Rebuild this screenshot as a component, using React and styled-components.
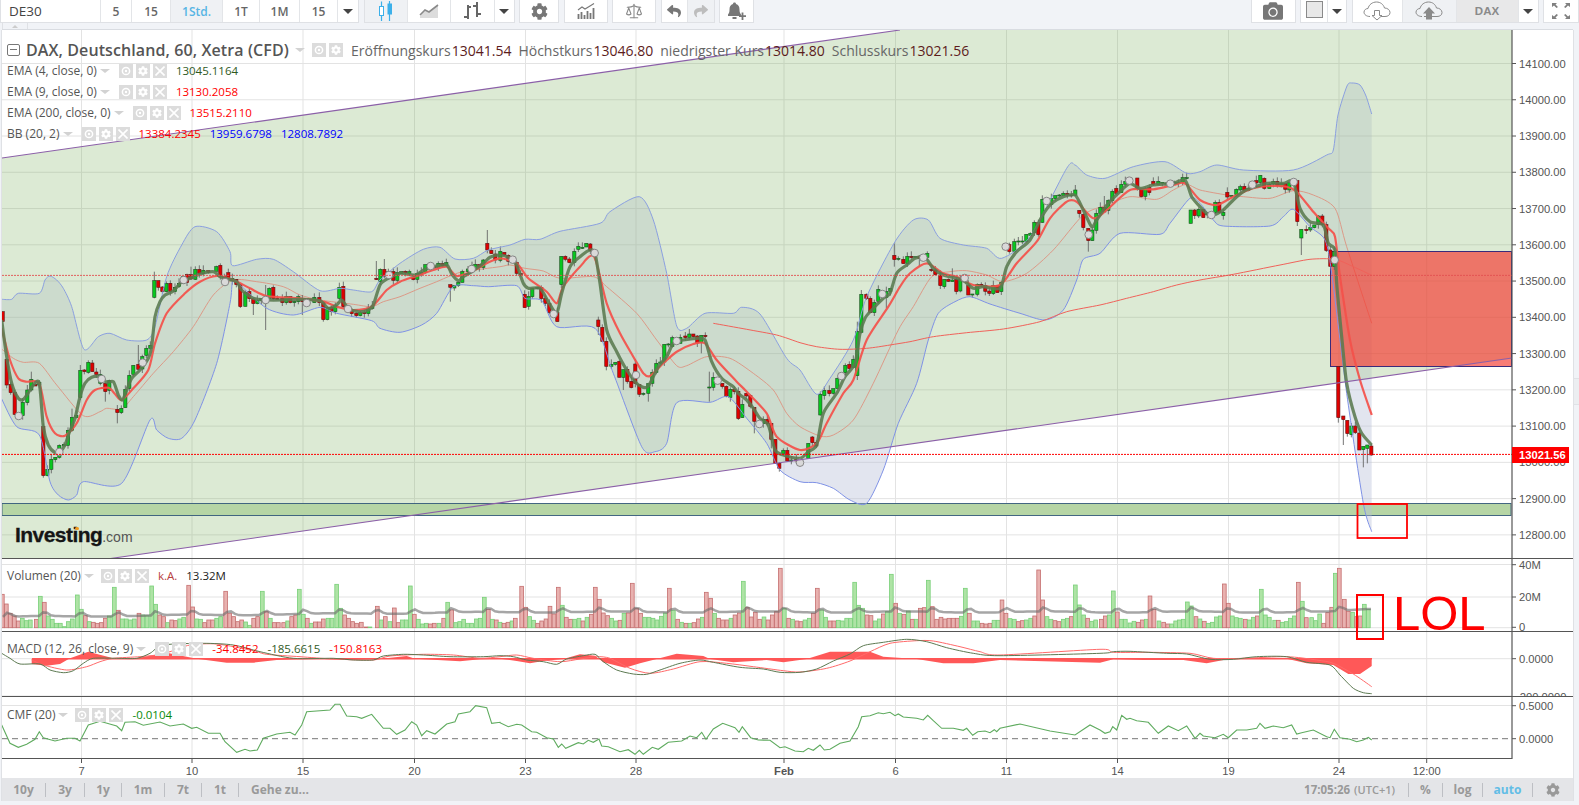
import React from "react";
import styled, { createGlobalStyle } from "styled-components";
import { FaCog, FaReply, FaShare, FaCamera } from "react-icons/fa";
import { Scale } from "lucide-react";

const GlobalStyle = createGlobalStyle`
  html, body { margin: 0; padding: 0; background: #f1f3f7; overflow: hidden; }
  body { font-family: "Open Sans", "Liberation Sans", sans-serif; }
  * { box-sizing: border-box; }
`;

/* ---------- chart data, traced from the picture ---------- */
const seg = (s, bx, by, k = 3) =>
  s.trim().split(/\s+/).map((t) => {
    const [x, y] = t.split(",").map(Number);
    return [bx + x / k, by + y / k];
  });
const toPts = (a) => a.map(([x, y]) => `${x.toFixed(1)},${y.toFixed(1)}`).join(" ");
const curve = (a) => {
  let d = "";
  for (let i = 0; i < a.length - 1; i++) {
    const p0 = a[Math.max(i - 1, 0)], p1 = a[i], p2 = a[i + 1], p3 = a[Math.min(i + 2, a.length - 1)];
    const k = 0.13;
    const c1 = [p1[0] + (p2[0] - p0[0]) * k, p1[1] + (p2[1] - p0[1]) * k];
    const c2 = [p2[0] - (p3[0] - p1[0]) * k, p2[1] - (p3[1] - p1[1]) * k];
    d += `C${c1[0].toFixed(1)} ${c1[1].toFixed(1)} ${c2[0].toFixed(1)} ${c2[1].toFixed(1)} ${p2[0].toFixed(1)} ${p2[1].toFixed(1)}`;
  }
  return d;
};
const smooth = (a) => `M${a[0][0].toFixed(1)} ${a[0][1].toFixed(1)}${curve(a)}`;

const EMA4 = [
  ...seg("5,450 20,560 35,640 55,685 70,688 85,668 100,645 118,640 130,770 145,825 165,848 180,845 195,825 207,790 225,745 240,680 255,640 275,622 300,620 320,637 340,635 355,675 367,690 380,660 395,625 420,600 445,565 455,530 465,440 480,395 495,375 520,363 545,335 570,325 600,312 640,305 660,320 675,325 710,335 725,360 760,385 800,390 850,390 900,388 960,392 985,415 1010,405 1025,390 1045,415 1075,425 1105,420 1120,405 1140,345 1165,325 1200,310", 0, 170),
  ...seg("45,315 75,298 100,290 140,285 155,312 175,332 190,320 215,305 250,280 270,262 300,255 330,265 350,285 370,340 385,355 420,355 445,395 470,430 485,370 510,290 540,260 570,240 585,250 600,340 620,480 650,545 680,600 710,640 735,653 750,640 775,590 800,560 820,520 850,510 890,505 915,510 935,575 965,625 1000,650 1015,670 1040,690 1060,715 1080,745 1105,765 1125,840 1150,855 1200,865", 400, 170),
  ...seg("25,905 50,885 70,790 110,730 135,680 165,640 180,550 195,505 215,480 250,445 270,430 290,370 320,345 345,325 375,322 400,355 430,375 470,385 495,395 520,415 550,410 600,415 620,350 650,305 690,270 725,200 755,160 790,140 825,135 850,180 875,230 890,210 925,160 965,120 990,100 1020,115 1060,105 1120,100 1155,90 1175,140 1200,170", 800, 150),
  ...seg("20,190 40,195 70,180 100,150 130,125 160,112 200,100 250,100 280,95 300,175 330,215 370,225 385,280 405,300 410,400 425,560 440,700 465,800 485,850 515,885", 1200, 150),
];
const EMA9 = [
  ...seg("5,475 30,570 55,625 80,635 118,640 140,740 165,790 195,797 230,760 260,690 285,660 325,653 345,672 365,690 400,655 445,600 465,520 500,430 555,370 600,335 650,318 700,330 750,355 800,378 900,385 970,395 1010,410 1060,420 1115,410 1160,360 1200,335", 0, 170),
  ...seg("50,318 100,300 140,290 170,318 215,305 260,280 300,265 350,280 385,325 440,365 470,400 490,350 540,290 582,260 620,400 660,490 700,560 730,610 750,618 790,580 830,545 880,522 915,520 950,570 1010,635 1040,665 1100,730 1130,800 1200,840", 400, 170),
  ...seg("50,880 80,820 130,730 160,690 200,570 265,470 300,410 330,370 380,340 430,370 470,380 520,405 600,405 650,340 710,275 750,205 800,155 830,155 880,205 920,180 990,120 1060,118 1120,105 1155,100 1200,150", 800, 150),
  ...seg("50,165 100,140 160,115 210,108 260,110 290,125 340,185 385,235 405,260 420,380 450,570 480,690 515,795", 1200, 150),
];
const BBMID = [
  ...seg("5,537 40,565 70,577 118,580 170,645 250,737 300,725 320,715 365,717 400,680 460,610 520,545 580,470 640,375 700,330 770,335 850,350 900,375 960,390 1060,403 1115,410 1150,395 1200,380", 0, 170),
  ...seg("60,355 110,335 150,318 190,305 300,290 330,285 375,295 430,303 480,325 580,320 620,350 710,430 770,510 830,587 860,587 920,560 990,565 1060,610 1120,660 1160,730 1200,770", 400, 170),
  ...seg("60,858 100,855 160,810 220,700 295,540 340,470 395,380 450,365 500,362 560,375 610,395 680,370 760,300 850,195 920,165 990,140 1070,148 1120,120 1160,103 1200,120", 800, 150),
  ...seg("80,135 130,140 210,145 280,122 340,135 405,175 440,290 515,520", 1200, 150),
];
const BBUP = [
  ...seg("5,388 35,388 55,370 118,370 135,330 150,318 170,330 190,355 215,410 252,538 295,500 330,490 380,510 440,510 465,470 500,320 545,225 585,170 650,185 690,245 698,287 770,268 820,268 880,305 960,362 1020,355 1060,360 1115,365 1140,330 1200,280", 0, 170),
  ...seg("70,238 120,232 165,267 220,265 265,240 330,225 375,208 420,208 480,184 600,160 630,125 718,80 760,150 800,310 830,468 860,475 915,430 1000,430 1025,412 1080,432 1160,565 1200,600", 400, 170),
  ...seg("50,733 90,685 160,570 200,440 285,275 340,210 385,210 420,265 490,285 560,295 605,325 690,260 800,55 825,45 860,75 915,85 1000,50 1095,35 1160,70 1200,65", 800, 150),
  ...seg("50,45 130,60 280,60 380,15 400,0", 1200, 150),
  [1338, 115], [1347, 86], [1352, 83], [1360, 85], [1366, 96], [1371.7, 114],
];
const BBLOW = [
  ...seg("5,687 50,770 118,795 150,935 175,975 205,990 230,975 250,935 365,940 450,750 470,780 505,805 545,805 585,750 650,580 690,400 698,335 720,345 800,415 880,435 960,412 1010,430 1115,452 1140,475 1200,487", 0, 170),
  ...seg("65,465 110,430 160,350 220,347 265,350 350,347 375,385 425,392 470,470 585,475 640,610 725,830 765,845 800,820 830,698 930,697 985,680 1040,745 1100,820 1140,900 1200,935", 400, 170),
  ...seg("50,998 100,1015 150,1050 200,1060 250,960 295,820 350,700 385,570 415,490 465,455 510,440 570,462 660,490 735,510 790,480 830,390 850,328 900,310 960,250 1080,253 1110,220 1170,145 1200,160", 800, 150),
  ...seg("40,210 70,228 210,228 250,200 280,178 330,230 375,270 395,370 440,730 490,1060 515,1145", 1200, 150),
];
const EMA200 = [
  ...seg("940,460 1040,478 1130,495 1200,518", 400, 170),
  ...seg("50,590 120,598 200,595 270,585 330,575 400,560 500,548 610,537 720,515 800,485 900,465 980,445 1060,425 1130,405 1200,390", 800, 150),
  ...seg("100,373 240,345 330,328 405,328 460,350 515,376", 1200, 150),
];

const parseCandles = (s, bx, by) =>
  s.trim().split(/\s+/).map((tok, i) => {
    const m = tok.match(/^(\d+)([rg])(\d+)-(\d+)(?:w(\d+)-(\d+))?$/);
    const t = +m[3], b = +m[4];
    return {
      x: bx + +m[1] / 3,
      g: m[2] === "g",
      t: by + t / 3,
      b: by + Math.max(b - t, 3) / 3 + t / 3,
      wt: by + (m[5] ? +m[5] : t - ((i * 7) % 6) * 3) / 3,
      wb: by + (m[6] ? +m[6] : b + ((i * 5) % 7) * 2) / 3,
    };
  });

const CANDLES = [
  ...parseCandles("8r425-455 20r568-645 32r643-668 44r668-733 68g697-737 82g660-698 94g628-660w605-665 106r643-648 118g637-645 130r769-917 142g898-917 154g868-898 166g862-869 178g826-862 192g823-828 204g781-826 216g742-781w716-785 229g736-743 241g601-683w585-690 253r600-605 265g577-607 277r579-605 289r606-614 301g614-640 316r640-665w640-695 328g632-661 352r718-728w705-760 364g715-728 376g658-713 388g616-655 400g586-613 415r583-598w525-600 427g560-597 439g535-556 451g526-535 463g332-382w305-385 475r332-352 487r351-365 499g340-365 511r340-365 525g352-365 537g340-350 549g320-340 561r314-338 573r314-327w290-330 586g298-328 598r298-311 610g301-311 625r302-307 649g290-304 661r286-319 673r320-328 685r308-325 697g326-332 709r328-344 721r344-410 736g367-409 748r365-386 760r386-401w386-435 772g391-401 784g386-391 808g355-386 820r352-386 832r385-389 847r385-398 859g380-398 871r380-398 883g394-398 895g380-395 907r390-395w375-435 943g382-398 958r382-398 970r398-449 982g413-449 994r412-425 1006g407-425 1018g352-385w338-390 1030r349-410w335-415 1055r422-431 1069r430-437 1081g428-437 1093r427-431 1105g414-431 1117g408-415 1129r325-329w273-330 1141g298-335 1153r298-320w267-325 1165g305-315 1180r305-331 1192g307-331 797g386-391w345-480", 0, 170),
  ...parseCandles("4g305-310 16r304-309 28g305-310 40r322-329 52g311-328 64g307-312 76g284-307 103r290-294 115g280-293 127r281-287 139g278-287 151r344-352w344-395 163g347-354 175g337-347 187g305-337 204g297-305 216g287-304 226g283-295 238r283-293 250g270-292 262r220-240w180-250 274r241-251 286r252-270 301g244-271 313r247-255 325r256-274 350r278-310 362r310-316 374r373-413 386g379-409 397g355-380 412g353-356 424r352-386 436r385-400 448r400-428 472r428-455 484g259-344 496r259-268 508r267-278 523g244-277 535g229-238 547g232-233 559g220-231 571r222-242 595r450-470w440-495 607r472-514 619r514-589 634g583-589 646g577-583 658r574-622 670g599-622w599-660 682r598-635 694r634-653 706r582-640 718r644-673 730g670-673 745g641-670w641-695 757g607-640 769g580-607 781g576-580 793g523-576 805g522-524 817g503-529 841g502-520 856r498-503 868g492-503 880r492-500 892r498-519 904g496-517w496-550 916r496-500 928g651-653w605-695 940g622-652 967r640-650 979r649-680 991g658-683 1003r658-665 1015r664-746 1027g703-743 1039r670-678 1051r676-709 1063r712-754w712-790 1090g748-761 1102r748-761 1114r760-808w760-835 1126r808-880 1138r880-895 1150g841-851 1162r841-873 1174g870-871 1189r868-873", 400, 170),
  ...parseCandles("25g880-925 37r861-878 49r877-888 61g733-795 73g721-737 88r721-731 100g716-730 112g685-716 136g646-668 148r643-656 160g628-652 172g545-677w515-690 184g433-547w420-550 199r433-446 211r445-488 223g458-488 235g418-454 259g425-442w410-475 271g415-425 283r316-329w280-350 295g325-328 310r328-341 322g319-341 334r319-323 346g320-323 358r320-325w315-350 382g310-322 394r358-362 406r360-374 421r376-407 433g388-410 445r388-394 457g390-395w355-395 469r388-425 481g388-423 505r406-435 517g432-433 532g403-433 544r403-408 556r406-424 568r423-430 580g407-431 592r406-428 604g398-425 628r284-305 643g275-305 655g273-274 667g273-274 679g253-274 691g250-256 703g217-248 715r218-254 727g148-217 754g146-164 766g137-146 778g135-137 790g130-137 802r130-135 814g135-137 826g120-136 838r181-191 850r193-233 865r235-272w235-305 877g240-272 889g190-241 901g172-191 913r172-186w138-186 925g151-181 937g124-152 949r115-131 964g103-128 976g95-103 1012r84-116 1024r119-140 1036g116-139 1048r112-128 1060r94-104 1075g94-103 1087g97-99 1099g99-101 1123g98-100 1135g97-99 1148g83-97 1160g83-85 1172g180-220 1184r180-197 1196g178-198", 800, 150),
  ...parseCandles("10r178-203 22g190-195 46g157-188 58r157-188 70g187-197 82r127-141 94g136-138 109g118-134 121g110-120 133r109-122 145g115-122 169r92-99 181g76-97 193r85-115 208g104-116 220g95-102 232r94-107 244g100-110 256r100-118 268g97-120 292r92-215w92-228 304g238-264w238-315 319r238-242 331g232-240 343g225-233 355g198-224 367r198-224 379r224-302 391r300-349 403g305-350 415r650-803w650-818 430r798-809w798-885 442r811-851w811-860 454g828-854 466r828-848 478r849-900 490g889-899w889-952 502g885-895w885-940 514r888-915", 1200, 150),
];

const CIRCLES = [
  ...seg("56,738 178,846 305,627 428,578 551,330 675,336 797,390 920,399 1044,417 1167,315", 0, 170),
  ...seg("92,288 215,297 338,269 461,432 584,249 708,615 830,513 953,632 1078,762 1200,878", 400, 170),
  ...seg("124,678 247,432 370,323 494,384 617,290 740,153 866,254 988,92 1111,101", 800, 150),
  ...seg("34,195 157,104 281,96 404,330", 1200, 150),
];

const parseVol = (s, bx, by) =>
  s.trim().split(/\s+/).map((tok) => {
    const m = tok.match(/^(\d+)([rg])(\d+)$/);
    return { x: bx + +m[1] / 3, g: m[2] === "g", y: Math.min(by + +m[3] / 3, 627) };
  });
const VOLUME = [
  ...parseVol("7r343 19r372 31r400 43r408 55r423 67g415 79g422 91g420 109r418 121g349 133r367 145g408 157g418 169g430 181g430 193g440 205g425 217g417 232g345 244g388 256r407 268g425 280r427 292r430 304r428 316r415 328g408 343g322 355r391 367g417 379g417 391g420 403g417 417r400 429g405 441g407 455g318 467g373 479r405 491r410 503g428 515r420 527r422 539g417 551g412 566r316 578r381 590g417 602g418 614r428 626r420 638r420 650g415 662g410 677r334 689r400 701r410 713r425 725r420 737g426 749g436 761r415 773r410 787g334 799r395 811g415 823r428 835r428 851r428 863g423 875r410 887r405 898g328 910g403 922r415 934g430 946r426 958r426 970r417 984g415 996g415 1010g313 1022g385 1034r405 1046r415 1058r425 1070r430 1084r427 1098r441 1110g442 1132r379 1144g420 1156r410 1170g425 1183r384 1195r428 1207g420 1219g420 1231g318 1243r403 1255g418 1267g432 1279g430 1291r432 1303r430 1317g430 1331r415 1343g367 1355r390 1367g428 1379g425 1391g418 1403g430 1415g430 1429g417 1441g415 1453g352 1465r388 1477g418 1489r420", 0, 480),
  ...parseVol("0g202 12r205 24r202 36g198 46r190 65r94 77r157 89g185 101g196 113r205 125r198 138r192 150r154 162r177 175r97 187g151 199r187 212r193 224g193 237g190 249r198 261g187 274r178 286r97 298r133 310r174 323r182 335g190 348g198 360r196 372g175 385r174 397r85 410r160 422r175 434g187 447g187 459g190 471g195 484g184 496g174 508r100 520g166 533r193 545g202 558r205 570g205 582r203 595r192 607g187 619r112 632r130 644g175 656r190 668r195 681r195 693g190 705r180 718r174 730g79 742r157 754r186 766r172 779r193 792g186 804r195 817r180 829r170 841r40 853g160 866r190 878g193 891r198 903r200 915g195 928g190 940r175 952r100 965g165 977g187 990r198 1002r198 1015g196 1027g198 1040g190 1052g190 1064g82 1076g151 1088g160 1101r180 1113r182 1126g198 1138g192 1150r177 1162g170 1174g58 1187r145 1199g175 1212r178 1225g168 1237r193 1249g193 1261r160 1273r158 1285g76 1297r155 1310r193 1323r187 1335r192 1347r190 1360r190 1372r190 1384g184 1396g100 1408r175 1421g198 1433g198 1446r205 1458r207 1470r205 1482g196 1495g196", 500, 555),
  ...parseVol("6r150 18r190 30g206 43g208 55r215 67r212 79g210 92g205 104r198 116r60 128r150 141g200 153g208 165r212 177r215 190g208 202g205 214r200 226g105 238g165 251g195 263r205 275g214 287g210", 1000, 550),
  ...parseVol("4r208 16r198 28g195 40g123 52r186 64g208 76g208 90g219 102g214 115r217 127r210 139g208 150r138 162r178 177g213 191r217 203r222 215g222 227g213 238g210 250g208 262g156 274g168 288r200 300g207 313r214 325g220 337g217 349g201 361g198 373r102 385r160 397g198 409g203 421g205 436r208 448g210 460g202 472r198 484g118 496g195 508g202 524g211 535r211 547g217 559g215 571g205 583g198 595r97 607g154 619r203 635g203 647g212 659g192 671r220 683r188 695r172 706g70 718r55 733r148 745r184 758g187 770r200 781r198 793g163 805g178", 1100, 550),
].filter((b) => b.x > 2);

const VOL_MA = (() => {
  const out = [];
  for (let x = 3; x <= 1372; x += 4) {
    const d = ((x - 40.6 + 370) % 37) - 4;
    const base = 617 - 5 * Math.min(1, x / 520) - (x > 1330 ? ((x - 1330) / 40) * 3 : 0);
    const bump = 4 * Math.exp(-((d / 5) ** 2)) + 0.6 * Math.sin(x / 23);
    out.push([x, base - bump]);
  }
  return out;
})();

const MACD_LINE = [
  ...seg("5,520 30,535 60,552 120,552 150,570 190,578 220,572 250,550 280,535 350,535 410,535 450,520 490,495 610,490 700,495 780,515 880,535 1000,535 1060,540 1120,540 1150,528 1210,523 1270,525 1350,530 1450,530 1500,527", 0, 480),
  ...seg("40,305 80,315 130,320 170,328 200,312 250,302 285,298 310,320 350,345 400,357 440,358 480,345 540,325 600,315 640,322 720,337 790,342 840,352 900,352 950,342 1000,318 1050,297 1090,272 1150,262 1220,253 1280,260 1340,278 1420,295 1500,302", 500, 555),
  ...seg("0,310 40,305 90,304 200,310 260,312 330,328 400,328 470,320 560,320 620,337 690,345 720,375 760,415 790,428 815,431", 1100, 550),
];
const MACD_SIGNAL = [
  ...seg("95,540 130,555 200,570 260,560 300,545 340,535 420,530 470,525 510,515 570,495 650,492 760,512 800,523 900,530 1000,537 1120,540 1170,528 1270,523 1360,525 1440,535 1500,530", 0, 480),
  ...seg("50,300 100,310 180,320 240,312 290,305 330,310 390,340 450,355 520,342 600,320 680,325 760,335 850,347 900,351 980,340 1050,318 1110,290 1170,265 1250,257 1300,258 1380,275 1440,290 1500,300", 500, 555),
  ...seg("0,298 40,307 150,307 270,310 340,325 430,325 560,320 650,330 700,340 760,372 815,410", 1100, 550),
];
const MACD_HIST = [
  ...seg("95,536 95,552 140,557 180,552 210,535 265,515 340,535 400,536 500,518 590,536 680,548 760,548 830,540 950,536 1060,540 1130,538 1220,528 1245,536 1380,544 1440,538 1500,536", 0, 480),
  ...seg("50,318 90,325 130,318 190,312 240,298 285,302 310,322 375,338 420,325 470,312 530,296 610,303 630,312 700,322 800,315 850,322 920,312 990,290 1040,290 1110,290 1150,305 1250,312 1330,325 1420,325 1500,315", 500, 555),
  ...seg("0,338 40,328 130,330 250,330 320,340 390,326 560,326 620,340 700,345 745,372 780,372 815,348 815,326", 1100, 550),
];

const CMF = [
  ...seg("5,735 30,790 55,802 80,793 105,778 118,755 130,773 165,783 200,775 225,775 240,783 265,735 300,724 350,738 365,752 375,727 405,725 430,736 480,726 510,738 550,732 575,745 590,742 625,760 660,760 675,785 710,817 735,808 750,813 772,810 790,775 830,762 870,757 885,765 905,735 920,695 990,690 1005,673 1020,673 1040,708 1070,710 1085,715 1115,703 1150,745 1170,745 1190,763 1215,750 1235,725 1250,735 1265,767 1280,752 1305,762 1340,732 1365,725 1375,702 1410,695 1427,677 1460,683 1475,730 1500,727", 0, 480),
  ...seg("0,503 25,515 50,508 65,510 95,530 110,532 140,548 160,552 175,577 185,567 197,580 235,563 250,567 265,556 280,562 297,552 305,573 325,575 360,590 385,584 405,598 418,586 430,598 457,577 475,583 505,562 545,558 570,543 590,548 605,532 618,553 640,522 668,505 705,518 717,532 727,515 752,548 775,555 810,556 840,578 855,575 885,588 910,590 925,580 940,586 960,570 973,585 990,583 1020,565 1050,558 1075,515 1085,485 1110,482 1135,473 1150,476 1170,472 1185,482 1195,477 1210,486 1250,490 1270,495 1283,481 1300,497 1325,520 1360,520 1390,526 1400,520 1418,541 1433,530 1455,528 1470,533 1483,524 1490,530 1500,520", 500, 555),
  [1020, 724], [1050, 731], [1075, 735], [1090, 725],
  ...seg("0,540 15,550 30,545 38,530 50,540 65,496 80,508 90,505 110,512 145,517 175,550 205,528 235,542 260,528 285,565 300,550 310,558 345,563 370,553 385,563 410,540 440,540 470,535 480,520 495,535 520,528 550,533 575,525 590,552 605,548 640,540 680,560 690,563 703,538 720,563 750,568 770,575 790,570 805,562 815,570", 1100, 550),
];

const GRID_X = [81.5, 192, 303, 414.5, 525.5, 636, 784, 895.5, 1006.5, 1117.5, 1228.5, 1339, 1426.7];
const PRICES = [14100, 14000, 13900, 13800, 13700, 13600, 13500, 13400, 13300, 13200, 13100, 13000, 12900, 12800];
const priceY = (p) => 63.5 + (14100 - p) * 0.3626;
const AXIS_X = 1512;

/* ---------- styled parts ---------- */
const Page = styled.div`
  width: 1579px;
  height: 805px;
  display: flex;
  flex-direction: column;
  background: #f1f3f7;
  position: relative;
`;
const Toolbar = styled.div`
  height: 23px;
  display: flex;
  justify-content: space-between;
`;
const ToolSet = styled.div`
  display: flex;
  gap: 4.5px;
`;
const ToolGroup = styled.div`
  display: flex;
  background: #fff;
  border: 1px solid #dfe1e5;
  border-top: 0;
`;
const SymbolField = styled.div`
  width: 100px;
  display: flex;
  align-items: center;
  padding-left: 8px;
  font-size: 13.5px;
  color: #444;
  border-right: 1px solid #e3e5e8;
`;
const ToolBtn = styled.div`
  width: ${(p) => p.$w}px;
  display: flex;
  align-items: center;
  justify-content: center;
  font-size: 12px;
  font-weight: 600;
  color: ${(p) => (p.$active ? "#57b5e4" : "#666")};
  background: ${(p) => (p.$active ? "#eff1f4" : "#fff")};
  border-right: ${(p) => (p.$last ? "0" : "1px solid #e3e5e8")};
  svg { display: block; }
`;
const DaxBtn = styled(ToolBtn)`
  background: #e8e8e9;
  color: #8a8a8a;
  font-family: "Liberation Sans", sans-serif;
  font-weight: 700;
  font-size: 11.5px;
`;
const Caret = styled.span`
  width: 0;
  height: 0;
  border-left: 5px solid transparent;
  border-right: 5px solid transparent;
  border-top: 5px solid #444;
`;
const Strip = styled.div`
  height: 7px;
  display: flex;
  padding-left: 2px;
`;
const StripTab = styled.div`
  width: 26px;
  height: 6px;
  border: 1px solid #dfe1e5;
  border-top: 0;
  border-bottom: 0;
  display: flex;
  justify-content: center;
  align-items: center;
  &::before {
    content: "";
    border-left: 3px solid transparent;
    border-right: 3px solid transparent;
    border-bottom: 3px solid #ccc;
  }
`;
const Frame = styled.div`
  width: 1571px;
  margin-left: 2px;
  background: #fff;
  display: flex;
  flex-direction: column;
  position: relative;
  box-shadow: 0 -1px 0 #d9dce1, 1px 0 0 #dfe1e5, -1px 0 0 #dfe1e5;
`;
const Pane = styled.div`
  position: relative;
  height: ${(p) => p.$h}px;
  overflow: hidden;
  svg { display: block; }
`;
const SideHandle = styled.div`
  position: absolute;
  right: -6px;
  top: 348px;
  width: 6px;
  height: 27px;
  background: #eceef1;
  border: 1px solid #e0e2e6;
  border-right: 0;
`;
const Legend = styled.div`
  position: absolute;
  left: 5px;
  top: ${(p) => p.$top}px;
  display: flex;
  flex-direction: column;
`;
const TitleRow = styled.div`
  height: 20px;
  display: flex;
  align-items: center;
  white-space: nowrap;
`;
const Collapse = styled.span`
  width: 13px;
  height: 12px;
  margin-right: 6px;
  border: 1px solid #777;
  border-radius: 2px;
  position: relative;
  &::after {
    content: "";
    position: absolute;
    left: 2px;
    right: 2px;
    top: 4px;
    height: 1px;
    background: #777;
  }
`;
const Title = styled.span`
  font-size: 16px;
  font-weight: 600;
  color: #555;
  letter-spacing: 0.1px;
`;
const LegendRow = styled.div`
  height: 21px;
  display: flex;
  align-items: center;
  white-space: nowrap;
`;
const SeriesName = styled.span`
  font-size: 12px;
  color: #555;
`;
const SmallCaret = styled.span`
  width: 0;
  height: 0;
  margin-left: ${(p) => p.$ml ?? 3}px;
  border-left: 5px solid transparent;
  border-right: 5px solid transparent;
  border-top: 4px solid #d2d2d2;
`;
const IconSet = styled.span`
  display: flex;
  gap: 3px;
  margin-left: ${(p) => p.$ml ?? 9}px;
  margin-right: ${(p) => p.$mr ?? 9}px;
`;
const LegendIcon = styled.span`
  width: 14px;
  height: 14px;
  background: #dcdcdc;
  display: flex;
  align-items: center;
  justify-content: center;
  color: #fff;
`;
const Value = styled.span`
  font-size: 11.5px;
  color: ${(p) => p.$c};
  margin-right: ${(p) => p.$mr ?? 9}px;
`;
const OhlcLabel = styled.span`
  font-size: 14px;
  color: #666;
  margin-right: 1px;
`;
const OhlcValue = styled.span`
  font-size: 14px;
  color: #5c1c1c;
  margin-right: 7px;
`;
const Logo = styled.div`
  position: absolute;
  left: 13px;
  top: 493px;
  font-family: "Liberation Sans", Arial, sans-serif;
  white-space: nowrap;
  display: flex;
  align-items: baseline;
  &::after {
    content: "";
    position: absolute;
    left: 60px;
    top: 4px;
    width: 4px;
    height: 3px;
    border-radius: 2px;
    background: #f29a1f;
  }
`;
const LogoMain = styled.span`
  font-size: 21px;
  font-weight: 700;
  color: #151515;
  letter-spacing: -0.55px;
  -webkit-text-stroke: 0.3px #151515;
`;
const LogoCom = styled.span`
  font-size: 14px;
  color: #555;
`;
const LolText = styled.div`
  position: absolute;
  left: 1391px;
  top: 559px;
  font-family: "Liberation Sans", Arial, sans-serif;
  font-size: 49px;
  line-height: 48px;
  color: #f00;
`;
const LolBox = styled.div`
  position: absolute;
  left: 1354px;
  top: 564px;
  width: 28px;
  height: 46px;
  border: 2px solid #f00;
`;
const BottomBar = styled.div`
  height: 23px;
  background: #e4e5e8;
  display: flex;
  align-items: center;
  font-size: 12px;
  font-weight: 700;
  color: #999;
`;
const RangeBtn = styled.div`
  width: ${(p) => p.$w}px;
  height: 14px;
  display: flex;
  align-items: center;
  justify-content: center;
  border-right: 1px solid #bdbfc4;
`;
const GoTo = styled.div`
  margin-left: 12px;
  color: #999;
  font-size: 12px;
`;
const BarRight = styled.div`
  margin-left: auto;
  display: flex;
  align-items: center;
`;
const Clock = styled.div`
  display: flex;
  gap: 4px;
  padding-right: 13px;
  height: 14px;
  align-items: center;
  font-size: 11.5px;
  border-right: 1px solid #bdbfc4;
  span { font-weight: 600; font-size: 11px; }
`;
const ScaleBtn = styled.div`
  width: ${(p) => p.$w}px;
  height: 14px;
  display: flex;
  align-items: center;
  justify-content: center;
  color: ${(p) => (p.$active ? "#62bde6" : "#999")};
  border-right: ${(p) => (p.$last ? "0" : "1px solid #bdbfc4")};
`;
const SquareSwatch = styled.span`
  width: 17px;
  height: 17px;
  margin-top: -4px;
  background: #e8e8e8;
  border: 1px solid #8a8a8a;
`;

/* ---------- small drawings ---------- */
const EyeGlyph = () => (
  <svg width="10" height="10" viewBox="0 0 10 10">
    <circle cx="5" cy="5" r="3.6" fill="none" stroke="#fff" strokeWidth="1.5" />
    <circle cx="5" cy="5" r="1.2" fill="#fff" />
  </svg>
);
const CloseGlyph = () => (
  <svg width="10" height="10" viewBox="0 0 10 10">
    <path d="M0.5 0.5L9.5 9.5M9.5 0.5L0.5 9.5" stroke="#fff" strokeWidth="1.6" />
  </svg>
);
const Actions = ({ close = true, ml, mr }) => (
  <IconSet $ml={ml} $mr={mr}>
    <LegendIcon><EyeGlyph /></LegendIcon>
    <LegendIcon><FaCog size={10} /></LegendIcon>
    {close && <LegendIcon><CloseGlyph /></LegendIcon>}
  </IconSet>
);

const CandleIcon = () => (
  <svg width="16" height="20" viewBox="0 0 16 20">
    <path d="M3.5 0.5V20M11.5 0V20" stroke="#3cb0ea" strokeWidth="1.2" />
    <rect x="1.5" y="5.5" width="4" height="9" fill="#fff" stroke="#3cb0ea" />
    <rect x="9.5" y="2.5" width="4.5" height="11" fill="#3cb0ea" />
  </svg>
);
const AreaIcon = () => (
  <svg width="20" height="14" viewBox="0 0 20 14">
    <path d="M1 12L6 6.5L10 8.5L19 1.5V14H1Z" fill="#dcdcdc" />
    <path d="M1 11L6 6L10 8L19 1" fill="none" stroke="#8a8a8a" strokeWidth="1.6" />
  </svg>
);
const BarsIcon = () => (
  <svg width="18" height="18" viewBox="0 0 18 18">
    <path d="M5 3V17M14 0V15" stroke="#666" strokeWidth="2" />
    <path d="M1 15H5M5 5H8M10 4H14M14 12H18" stroke="#666" strokeWidth="2" />
  </svg>
);
const IndicatorIcon = () => (
  <svg width="18" height="16" viewBox="0 0 18 16">
    <path d="M1.5 16V11M4.5 16V9M7.5 16V12M10.5 16V8M13.5 16V10M16.5 16V5" stroke="#777" strokeWidth="1.8" />
    <path d="M1 7L5 4L8 6L13 3L17 0.5" fill="none" stroke="#777" strokeWidth="1.1" />
  </svg>
);
const BellPlus = () => (
  <svg width="20" height="19" viewBox="0 0 20 19">
    <path d="M7.5 0.5C8.6 0.5 9 1.2 9 2C11.5 2.6 12.5 4.6 12.5 7.5C12.5 10 13 11 14 12.5V14H1V12.5C2 11 2.5 10 2.5 7.5C2.5 4.6 3.5 2.6 6 2C6 1.2 6.4 0.5 7.5 0.5Z" fill="#777" />
    <rect x="5.5" y="15" width="4" height="2" fill="#777" />
    <path d="M15.5 10.5V18M12 14.2H19" stroke="#777" strokeWidth="1.8" />
  </svg>
);
const CloudDown = () => (
  <svg width="28" height="20" viewBox="0 0 28 20">
    <path d="M7 15.5C3.5 15.5 1 13.5 1 11.2C1 9 3 7.5 5 7.5C6 3.5 9.5 1 13.5 1C17.5 1 20.5 3.5 21.5 7C24.5 7 27 9 27 11.5C27 14 25 15.5 22 15.5H18" fill="none" stroke="#8a8a8a" />
    <path d="M11.5 9.5H16.5V14.5H19L14 19L9 14.5H11.5Z" fill="#fff" stroke="#8a8a8a" />
  </svg>
);
const CloudUp = () => (
  <svg width="28" height="20" viewBox="0 0 28 20">
    <path d="M7 15.5C3.5 15.5 1 13.5 1 11.2C1 9 3 7.5 5 7.5C6 3.5 9.5 1 13.5 1C17.5 1 20.5 3.5 21.5 7C24.5 7 27 9 27 11.5C27 14 25 15.5 22 15.5H9" fill="none" stroke="#8a8a8a" />
    <path d="M14 6L20 12.5H17V18.5H11V12.5H8Z" fill="#8a8a8a" />
  </svg>
);
const Fullscreen = () => (
  <svg width="20" height="18" viewBox="0 0 20 18">
    <path d="M1 1H6L4.5 2.5L7 5L5.5 6L3 3.5L1 5ZM19 1H14L15.5 2.5L13 5L14.5 6L17 3.5L19 5ZM1 17H6L4.5 15.5L7 13L5.5 12L3 14.5L1 13ZM19 17H14L15.5 15.5L13 13L14.5 12L17 14.5L19 13Z" fill="#808080" />
  </svg>
);

/* ---------- chart panes ---------- */
const Vb = ({ y, h, children }) => (
  <svg width="1571" height={h} viewBox={`2 ${y} 1571 ${h}`}>{children}</svg>
);
const AXIS_FONT = { fontFamily: "'Liberation Sans', Arial, sans-serif", fontSize: 11.2, fill: "#555" };
const GridV = ({ y1, y2 }) =>
  GRID_X.map((x) => <line key={x} x1={x} x2={x} y1={y1} y2={y2} stroke="#e3e3e3" />);
const GridH = ({ ys }) =>
  ys.map((y) => <line key={y} x1="2" x2={AXIS_X} y1={y} y2={y} stroke="#e3e3e3" />);
const AxisLine = ({ y1, y2 }) => <line x1={AXIS_X} x2={AXIS_X} y1={y1} y2={y2} stroke="#555" strokeWidth="1.2" />;
const Tick = ({ y, label, x = 1519 }) => (
  <g>
    <line x1={AXIS_X} x2={AXIS_X + 4} y1={y} y2={y} stroke="#555" />
    <text x={x} y={y + 4} {...AXIS_FONT}>{label}</text>
  </g>
);
const PaneRule = ({ y }) => <line x1="2" x2="1573" y1={y} y2={y} stroke="#555" strokeWidth="1.2" />;

const CHANNEL = "2,158 900,30 1512,30 1512,358 107,559 2,559";
const BELOW = "107,559 1512,358 1512,559";
const BAND = `${smooth(BBUP)}L${BBLOW[BBLOW.length - 1].join(" ")}${curve([...BBLOW].reverse())}Z`;

const MainChart = () => (
  <Vb y={30} h={529}>
    <defs>
      <clipPath id="inChannel"><polygon points={CHANNEL} /></clipPath>
      <clipPath id="belowChannel"><polygon points={BELOW} /></clipPath>
    </defs>
    <GridH ys={PRICES.map(priceY)} />
    <GridV y1={30} y2={559} />
    <polygon points={CHANNEL} fill="rgb(115,171,83)" fillOpacity="0.25" />
    <rect x="2" y="503.5" width="1509" height="12" fill="#b6d5a5" stroke="#33597a" strokeWidth="0.9" />
    <path d={BAND} fill="rgb(170,187,188)" fillOpacity="0.3" clipPath="url(#inChannel)" />
    <path d={BAND} fill="rgb(183,190,215)" fillOpacity="0.4" clipPath="url(#belowChannel)" />
    <path d={smooth(BBMID)} fill="none" stroke="#dc9a88" strokeWidth="1" />
    <rect x="1330.5" y="251.5" width="181" height="115" fill="rgb(244,60,50)" fillOpacity="0.67" stroke="#3a2a7a" strokeWidth="1" />
    {CANDLES.map((c, i) => (
      <g key={i}>
        <line x1={c.x} x2={c.x} y1={c.wt} y2={c.wb} stroke="#666" strokeWidth="0.9" />
        <rect x={c.x - 1.6} y={c.t} width="3.2" height={c.b - c.t} fill={c.g ? "#08c81e" : "#e00000"} stroke={c.g ? "#1c4a20" : "#5a1414"} strokeWidth="0.6" />
      </g>
    ))}
    <path d={smooth(BBUP)} fill="none" stroke="#8ba0e0" strokeWidth="1" />
    <path d={smooth(BBLOW)} fill="none" stroke="#7f92e6" strokeWidth="1" />
    <path d={smooth(EMA200)} fill="none" stroke="#f0625a" strokeWidth="1" />
    <path d={smooth(EMA9)} fill="none" stroke="#f4504a" strokeOpacity="0.92" strokeWidth="2.2" strokeLinejoin="round" />
    <path d={smooth(EMA4)} fill="none" stroke="#5a7a50" strokeOpacity="0.88" strokeWidth="3.2" strokeLinejoin="round" />
    {CIRCLES.map(([x, y], i) => (
      <circle key={i} cx={x} cy={y} r="3.8" fill="#d9d9d9" stroke="#7e7e7e" strokeWidth="0.9" />
    ))}
    <line x1="2" y1="158" x2="900" y2="30" stroke="#8b5fa8" strokeWidth="1.1" />
    <line x1="107" y1="559" x2="1512" y2="358" stroke="#8b5fa8" strokeWidth="1.1" />
    <line x1="2" x2={AXIS_X} y1="275.4" y2="275.4" stroke="#e25050" strokeWidth="0.9" strokeDasharray="2 1" />
    <line x1="2" x2={AXIS_X} y1="454.4" y2="454.4" stroke="#f00" strokeWidth="1" strokeDasharray="2 1" />
    <rect x="1357.5" y="504" width="49.5" height="34" fill="none" stroke="#f00" strokeWidth="1.8" />
    <AxisLine y1={30} y2={559} />
    {PRICES.map((p) => <Tick key={p} y={priceY(p)} label={`${p}.00`} />)}
    <rect x={AXIS_X} y="447" width="57" height="16" fill="#f00" />
    <text x="1519" y="459" {...AXIS_FONT} fill="#fff" fontWeight="700">13021.56</text>
    <PaneRule y={558.5} />
  </Vb>
);

const VolumeChart = () => (
  <Vb y={559} h={73}>
    <GridH ys={[564.5, 597, 627.7]} />
    <GridV y1={559} y2={632} />
    {VOLUME.map((b, i) => (
      <rect key={i} x={b.x - 1.85} y={b.y} width="3.7" height={627.7 - b.y} fill={b.g ? "#aee3a5" : "#e8b1af"} stroke={b.g ? "#78d078" : "#c56f6f"} strokeWidth="0.8" />
    ))}
    <polyline points={toPts(VOL_MA)} fill="none" stroke="#6a6a6a" strokeOpacity="0.6" strokeWidth="2.5" />
    <AxisLine y1={559} y2={632} />
    <Tick y={564.7} label="40M" />
    <Tick y={597} label="20M" />
    <Tick y={627.3} label="0" />
    <PaneRule y={631.5} />
  </Vb>
);

const MacdChart = () => (
  <Vb y={632} h={65}>
    <GridH ys={[658.7, 696]} />
    <GridV y1={632} y2={697} />
    <polygon points={toPts(MACD_HIST)} fill="#ff5858" />
    <line x1="32" x2="1372" y1="658.7" y2="658.7" stroke="#f55" strokeWidth="1.4" />
    <path d={smooth(MACD_SIGNAL)} fill="none" stroke="#ff6a6a" strokeWidth="1" />
    <path d={smooth(MACD_LINE)} fill="none" stroke="#5d7a52" strokeWidth="1" />
    <AxisLine y1={632} y2={697} />
    <Tick y={658.7} label="0.0000" />
    <Tick y={696.5} label="-200.0000" x={1516} />
    <PaneRule y={696.5} />
  </Vb>
);

const CmfChart = () => (
  <Vb y={697} h={62}>
    <GridH ys={[705.5]} />
    <GridV y1={697} y2={759} />
    <line x1="2" x2={AXIS_X} y1="738.7" y2="738.7" stroke="#777" strokeDasharray="6 4" />
    <polyline points={toPts(CMF)} fill="none" stroke="#5fab5f" strokeWidth="1.1" />
    <AxisLine y1={697} y2={759} />
    <Tick y={705.7} label="0.5000" />
    <Tick y={738.7} label="0.0000" />
    <line x1="2" x2={AXIS_X} y1="758.5" y2="758.5" stroke="#555" strokeWidth="1.2" />
  </Vb>
);

const TIME_LABELS = [
  [81.5, "7"], [192, "10"], [303, "15"], [414.5, "20"], [525.5, "23"], [636, "28"], [784, "Feb"],
  [895.5, "6"], [1006.5, "11"], [1117.5, "14"], [1228.5, "19"], [1339, "24"], [1426.7, "12:00"],
];
const TimeAxis = () => (
  <Vb y={759} h={19}>
    {TIME_LABELS.map(([x, t]) => (
      <g key={t}>
        <line x1={x} x2={x} y1="759" y2="763" stroke="#555" />
        <text x={x} y="774.5" textAnchor="middle" {...AXIS_FONT} fontWeight={t === "Feb" ? 700 : 400}>{t}</text>
      </g>
    ))}
  </Vb>
);

const RANGES = [["10y", 44], ["3y", 39], ["1y", 37], ["1m", 43], ["7t", 37], ["1t", 37]];
const OHLC = [
  ["Eröffnungskurs", "13041.54"],
  ["Höchstkurs", "13046.80"],
  ["niedrigster Kurs", "13014.80"],
  ["Schlusskurs", "13021.56"],
];

export default function App() {
  return (
    <Page>
      <GlobalStyle />
      <Toolbar>
        <ToolSet>
          <ToolGroup>
            <SymbolField>DE30</SymbolField>
            <ToolBtn $w={31}>5</ToolBtn>
            <ToolBtn $w={39}>15</ToolBtn>
            <ToolBtn $w={52} $active>1Std.</ToolBtn>
            <ToolBtn $w={37}>1T</ToolBtn>
            <ToolBtn $w={40}>1M</ToolBtn>
            <ToolBtn $w={38}>15</ToolBtn>
            <ToolBtn $w={20} $last><Caret /></ToolBtn>
          </ToolGroup>
          <ToolGroup>
            <ToolBtn $w={43} $active><CandleIcon /></ToolBtn>
            <ToolBtn $w={43}><AreaIcon /></ToolBtn>
            <ToolBtn $w={44}><BarsIcon /></ToolBtn>
            <ToolBtn $w={19} $last><Caret /></ToolBtn>
          </ToolGroup>
          <ToolGroup><ToolBtn $w={38} $last><FaCog size={17} color="#777" /></ToolBtn></ToolGroup>
          <ToolGroup><ToolBtn $w={42} $last><IndicatorIcon /></ToolBtn></ToolGroup>
          <ToolGroup><ToolBtn $w={42} $last><Scale size={18} color="#888" strokeWidth={1.4} /></ToolBtn></ToolGroup>
          <ToolGroup>
            <ToolBtn $w={26}><FaReply size={14} color="#777" /></ToolBtn>
            <ToolBtn $w={26} $active $last><FaShare size={14} color="#bdbdbd" /></ToolBtn>
          </ToolGroup>
          <ToolGroup><ToolBtn $w={33} $last><BellPlus /></ToolBtn></ToolGroup>
        </ToolSet>
        <ToolSet>
          <ToolGroup><ToolBtn $w={43} $last><FaCamera size={20} color="#777" /></ToolBtn></ToolGroup>
          <ToolGroup>
            <ToolBtn $w={27}><SquareSwatch /></ToolBtn>
            <ToolBtn $w={18} $last><Caret /></ToolBtn>
          </ToolGroup>
          <ToolGroup>
            <ToolBtn $w={50}><CloudDown /></ToolBtn>
            <ToolBtn $w={54} $active><CloudUp /></ToolBtn>
            <DaxBtn $w={62}>DAX</DaxBtn>
            <ToolBtn $w={19} $last><Caret /></ToolBtn>
          </ToolGroup>
          <ToolGroup><ToolBtn $w={34} $last><Fullscreen /></ToolBtn></ToolGroup>
        </ToolSet>
      </Toolbar>
      <Strip><StripTab /></Strip>
      <Frame>
        <SideHandle />
        <Pane $h={529}>
          <MainChart />
          <Legend $top={10}>
            <TitleRow>
              <Collapse />
              <Title>DAX, Deutschland, 60, Xetra (CFD)</Title>
              <SmallCaret $ml={6} />
              <Actions close={false} ml={7} mr={8} />
              {OHLC.map(([l, v]) => (
                <React.Fragment key={l}>
                  <OhlcLabel>{l}</OhlcLabel>
                  <OhlcValue>{v}</OhlcValue>
                </React.Fragment>
              ))}
            </TitleRow>
            <LegendRow>
              <SeriesName>EMA (4, close, 0)</SeriesName><SmallCaret /><Actions />
              <Value $c="#2f5a1e">13045.1164</Value>
            </LegendRow>
            <LegendRow>
              <SeriesName>EMA (9, close, 0)</SeriesName><SmallCaret /><Actions />
              <Value $c="#f00">13130.2058</Value>
            </LegendRow>
            <LegendRow>
              <SeriesName>EMA (200, close, 0)</SeriesName><SmallCaret /><Actions />
              <Value $c="#f00">13515.2110</Value>
            </LegendRow>
            <LegendRow>
              <SeriesName>BB (20, 2)</SeriesName><SmallCaret /><Actions />
              <Value $c="#f00">13384.2345</Value>
              <Value $c="#00f">13959.6798</Value>
              <Value $c="#00f">12808.7892</Value>
            </LegendRow>
          </Legend>
          <Logo>
            <LogoMain>Investing</LogoMain>
            <LogoCom>.com</LogoCom>
          </Logo>
        </Pane>
        <Pane $h={73}>
          <VolumeChart />
          <Legend $top={6}>
            <LegendRow>
              <SeriesName>Volumen (20)</SeriesName><SmallCaret /><Actions ml={7} />
              <Value $c="#b84040">k.A.</Value>
              <Value $c="#222">13.32M</Value>
            </LegendRow>
          </Legend>
        </Pane>
        <Pane $h={65}>
          <MacdChart />
          <Legend $top={6}>
            <LegendRow>
              <SeriesName>MACD (12, 26, close, 9)</SeriesName><SmallCaret /><Actions />
              <Value $c="#f00">-34.8452</Value>
              <Value $c="#2f5a1e">-185.6615</Value>
              <Value $c="#f00">-150.8163</Value>
            </LegendRow>
          </Legend>
        </Pane>
        <Pane $h={62}>
          <CmfChart />
          <Legend $top={7}>
            <LegendRow>
              <SeriesName>CMF (20)</SeriesName><SmallCaret /><Actions ml={7} />
              <Value $c="#0a8a0a">-0.0104</Value>
            </LegendRow>
          </Legend>
        </Pane>
        <Pane $h={19}>
          <TimeAxis />
        </Pane>
        <BottomBar>
          {RANGES.map(([t, w]) => <RangeBtn key={t} $w={w}>{t}</RangeBtn>)}
          <GoTo>Gehe zu...</GoTo>
          <BarRight>
            <Clock>17:05:26 <span>(UTC+1)</span></Clock>
            <ScaleBtn $w={34}>%</ScaleBtn>
            <ScaleBtn $w={40}>log</ScaleBtn>
            <ScaleBtn $w={50} $active>auto</ScaleBtn>
            <ScaleBtn $w={40} $last><FaCog size={14} color="#999" /></ScaleBtn>
          </BarRight>
        </BottomBar>
        <LolBox />
        <LolText>LOL</LolText>
      </Frame>
    </Page>
  );
}
